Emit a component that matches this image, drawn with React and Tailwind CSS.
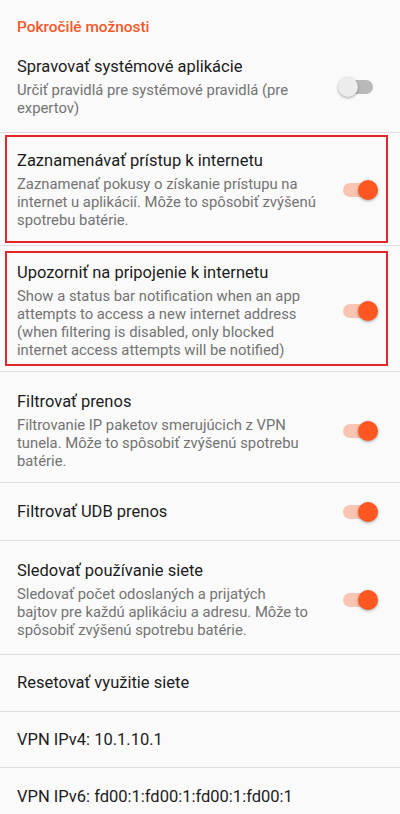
import React from 'react';

const Toggle = ({ on }) => (
    <div className="relative w-[40px] h-[24px] flex items-center shrink-0 ml-auto">
        <div className={`w-[30px] h-[14px] rounded-full ml-[5px] ${on ? 'bg-[#f9c4b2]' : 'bg-[#b9b9b9]'}`} />
        <div
            className={`absolute top-[2px] w-[20px] h-[20px] rounded-full shadow-[0_1px_3px_rgba(0,0,0,0.35)] ${on ? 'left-[20px] bg-[#ff5722]' : 'left-0 bg-[#ececec]'}`}
        />
    </div>
);

const Pref = ({ title, summary, on, className }) => (
    <div className={`flex items-center pl-[17px] pr-[22px] ${className}`}>
        <div className="shrink-0">
            <div className="text-[16.5px] leading-[22px] text-[#1c1c1c]">{title}</div>
            {summary && (
                <div className="text-[14.8px] leading-[18px] text-[#737373] mt-[3px] whitespace-nowrap">
                    {summary.map((line, i) => (
                        <div key={i}>{line}</div>
                    ))}
                </div>
            )}
        </div>
        {on !== undefined && <Toggle on={on} />}
    </div>
);

const Divider = () => <div className="h-px bg-[#dedede]" />;

export default function App() {
    return (
        <div className="min-h-screen bg-[#fafafa]" style={{ fontFamily: 'Roboto, "Noto Sans", sans-serif' }}>
            {/* Hlavička sekcie */}
            <div className="pl-[17px] pt-[17px] h-[44px] text-[15.4px] leading-[20px] font-medium text-[#f4592a]">
                Pokročilé možnosti
            </div>

            <Pref
                className="pt-[12px] pb-[15px]"
                title="Spravovať systémové aplikácie"
                summary={['Určiť pravidlá pre systémové pravidlá (pre', 'expertov)']}
                on={false}
            />
            <Divider />

            {/* Zvýraznené položky */}
            <div className="pt-[2px] pb-[2px] pl-[5px] pr-[12px]">
                <div className="border-2 border-[#e3262b]">
                    <Pref
                        className="pt-[13px] pb-[12px] !pl-[10px] !pr-[8px]"
                        title="Zaznamenávať prístup k internetu"
                        summary={[
                            'Zaznamenať pokusy o získanie prístupu na',
                            'internet u aplikácií. Môže to spôsobiť zvýšenú',
                            'spotrebu batérie.',
                        ]}
                        on={true}
                    />
                </div>
            </div>
            <Divider />
            <div className="pt-[5px] pb-[5px] pl-[5px] pr-[12px]">
                <div className="border-2 border-[#e3262b]">
                    <Pref
                        className="pt-[9px] pb-[5px] !pl-[10px] !pr-[8px]"
                        title="Upozorniť na pripojenie k internetu"
                        summary={[
                            'Show a status bar notification when an app',
                            'attempts to access a new internet address',
                            '(when filtering is disabled, only blocked',
                            'internet access attempts will be notified)',
                        ]}
                        on={true}
                    />
                </div>
            </div>
            <Divider />

            <Pref
                className="pt-[19px] pb-[12px]"
                title="Filtrovať prenos"
                summary={[
                    'Filtrovanie IP paketov smerujúcich z VPN',
                    'tunela. Môže to spôsobiť zvýšenú spotrebu',
                    'batérie.',
                ]}
                on={true}
            />
            <Divider />
            <Pref className="h-[57px]" title="Filtrovať UDB prenos" on={true} />
            <Divider />
            <Pref
                className="pt-[19px] pb-[15px]"
                title="Sledovať používanie siete"
                summary={[
                    'Sledovať počet odoslaných a prijatých',
                    'bajtov pre každú aplikáciu a adresu. Môže to',
                    'spôsobiť zvýšenú spotrebu batérie.',
                ]}
                on={true}
            />
            <Divider />
            <Pref className="h-[56px]" title="Resetovať využitie siete" />
            <Divider />
            <Pref className="h-[55px]" title="VPN IPv4: 10.1.10.1" />
            <Divider />
            <Pref className="h-[58px]" title="VPN IPv6: fd00:1:fd00:1:fd00:1:fd00:1" />
        </div>
    );
}
